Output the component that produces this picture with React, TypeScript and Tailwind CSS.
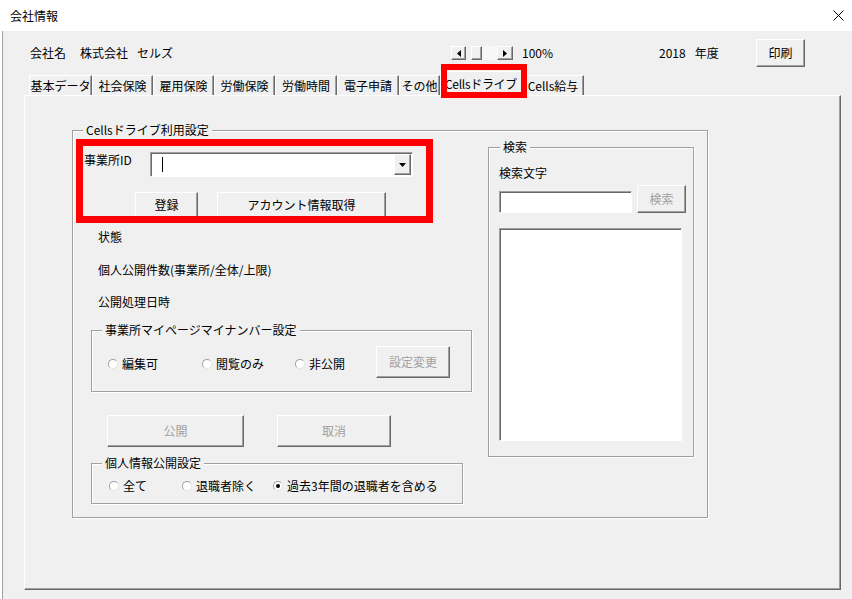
import type { ReactNode } from 'react';

// Win32-style 3D edges
const raised =
  'bg-[#f0f0f0] border border-white border-r-[#696969] border-b-[#696969] shadow-[inset_-1px_-1px_0_#a0a0a0]';
const sunken =
  'bg-white border border-[#a0a0a0] border-r-white border-b-white shadow-[inset_1px_1px_0_#696969]';
const etched =
  'relative border border-[#a0a0a0] shadow-[inset_1px_1px_0_#fff,1px_1px_0_#fff]';

const TABS = [
  { label: '基本データ', w: 'w-[63px]' },
  { label: '社会保険', w: 'w-[61px]' },
  { label: '雇用保険', w: 'w-[61px]' },
  { label: '労働保険', w: 'w-[61px]' },
  { label: '労働時間', w: 'w-[62px]' },
  { label: '電子申請', w: 'w-[62px]' },
  { label: 'その他', w: 'w-[41px]' },
];

function Button({ className, disabled, children }: { className: string; disabled?: boolean; children?: ReactNode }) {
  return (
    <div className={`${raised} ${className} flex items-center justify-center ${disabled ? 'text-[#a0a0a0]' : ''}`}>
      {children}
    </div>
  );
}

function Group({ label, labelLeft, className, children }: { label: string; labelLeft: string; className: string; children?: ReactNode }) {
  return (
    <div className={`${etched} ${className}`}>
      <span className={`absolute -top-[9px] ${labelLeft} bg-[#f0f0f0] px-[3px] leading-[16px]`}>{label}</span>
      {children}
    </div>
  );
}

function Radio({ label, checked, className }: { label: string; checked?: boolean; className?: string }) {
  return (
    <div className={`flex items-center ${className ?? ''}`}>
      <span className="w-[10px] h-[10px] rounded-full bg-white border border-[#a0a0a0] border-r-[#e3e3e3] border-b-[#e3e3e3] flex items-center justify-center">
        {checked && <span className="w-[4px] h-[4px] rounded-full bg-black" />}
      </span>
      <span className="ml-[4px]">{label}</span>
    </div>
  );
}

function Arrow({ dir }: { dir: 'left' | 'right' | 'down' }) {
  if (dir === 'down')
    return (
      <svg width="7" height="4" viewBox="0 0 7 4">
        <polygon points="0,0 7,0 3.5,4" fill="#000" />
      </svg>
    );
  return (
    <svg width="4" height="7" viewBox="0 0 4 7">
      <polygon points={dir === 'left' ? '4,0 4,7 0,3.5' : '0,0 0,7 4,3.5'} fill="#000" />
    </svg>
  );
}

export default function App() {
  return (
    <div className="w-[852px] h-[599px] bg-white text-black text-[12px] leading-[16px] font-['Noto_Sans_CJK_JP','Noto_Sans',sans-serif] overflow-hidden flex flex-col">
      {/* title bar */}
      <div className="h-[31px] shrink-0 flex items-center justify-between pl-[10px] pr-[8px]">
        <span>会社情報</span>
        <svg width="11" height="11" viewBox="0 0 11 11">
          <path d="M0.5 0.5 L10.5 10.5 M10.5 0.5 L0.5 10.5" stroke="#000" strokeWidth="1" />
        </svg>
      </div>

      <div className="flex-1 ml-[2px] border-l border-[#a0a0a0] bg-[#f0f0f0] pt-[8px] flex flex-col">
        {/* header row */}
        <div className="h-[28px] flex items-center pl-[27px]">
          <span className="w-[50px]">会社名</span>
          <span className="w-[371px]">
            株式会社<span className="ml-[9px]">セルズ</span>
          </span>
          <div className="flex items-center">
            <div className={`${raised} w-[15px] h-[14px] flex items-center justify-center`}>
              <Arrow dir="left" />
            </div>
            <div className={`${raised} ml-[5px] w-[11px] h-[14px]`} />
            <div className="w-[15px] h-[14px] bg-[#f7f7f7]" />
            <div className={`${raised} w-[16px] h-[14px] flex items-center justify-center`}>
              <Arrow dir="right" />
            </div>
          </div>
          <span className="ml-[9px] w-[137px]">100%</span>
          <span className="w-[97px]">
            2018<span className="ml-[9px]">年度</span>
          </span>
          <Button className="w-[49px] h-[28px]">印刷</Button>
        </div>

        {/* tabs */}
        <div className="h-[28px] flex items-end pl-[26px]">
          {TABS.map((t) => (
            <div
              key={t.label}
              className={`${t.w} h-[20px] flex items-center justify-center border-t border-l border-white border-r border-r-[#696969] shadow-[inset_-1px_0_0_#a0a0a0]`}
            >
              {t.label}
            </div>
          ))}
          <div className="relative z-10 -mb-px w-[82px] h-[25px] pb-px flex items-center justify-center bg-[#f0f0f0] border-t border-l border-white border-r border-r-[#696969] tracking-[-0.3px]">
            Cellsドライブ
            <div className="absolute left-[0px] -top-[8px] w-[86px] h-[34px] border-[6px] border-[#ff0000]" />
          </div>
          <div className="w-[62px] h-[20px] flex items-center justify-center border-t border-l border-white border-r border-r-[#696969] shadow-[inset_-1px_0_0_#a0a0a0]">
            Cells給与
          </div>
        </div>

        {/* tab page */}
        <div className="ml-[21px] w-[817px] h-[495px] border-t border-l border-white border-r border-b border-r-[#696969] border-b-[#696969] shadow-[inset_-1px_-1px_0_#a0a0a0] pl-[47px] pt-[34px]">
          <Group label="Cellsドライブ利用設定" labelLeft="left-[10px]" className="w-[636px] h-[388px] flex items-start pt-[16px] pl-[11px]">
            <div className="absolute z-10 left-[3px] top-[8px] w-[357px] h-[84px] border-[7px] border-[#ff0000]" />

            <div className="w-[390px] pt-[5px] flex flex-col">
              <div className="flex items-start">
                <span className="w-[66px]">事業所ID</span>
                <div className={`${sunken} w-[263px] h-[25px] flex items-center justify-between pr-px`}>
                  <span className="ml-[11px] w-px h-[15px] bg-black" />
                  <div className={`${raised} w-[17px] h-[21px] flex items-center justify-center`}>
                    <Arrow dir="down" />
                  </div>
                </div>
              </div>

              <div className="mt-[15px] flex pl-[51px] gap-[19px]">
                <Button className="w-[63px] h-[26px]">登録</Button>
                <Button className="w-[169px] h-[26px]">アカウント情報取得</Button>
              </div>

              <span className="mt-[11px] pl-[14px]">状態</span>
              <span className="mt-[17px] pl-[14px]">個人公開件数(事業所/全体/上限)</span>
              <span className="mt-[16px] pl-[14px]">公開処理日時</span>

              <Group label="事業所マイページマイナンバー設定" labelLeft="left-[10px]" className="mt-[20px] ml-[7px] w-[381px] h-[62px] pt-[15px] pl-[16px] flex items-start">
                <Radio label="編集可" className="w-[94px] mt-[10px]" />
                <Radio label="閲覧のみ" className="w-[93px] mt-[10px]" />
                <Radio label="非公開" className="w-[81px] mt-[10px]" />
                <Button className="w-[74px] h-[32px]" disabled>
                  設定変更
                </Button>
              </Group>

              <div className="mt-[23px] pl-[23px] flex gap-[33px]">
                <Button className="w-[137px] h-[32px]" disabled>
                  公開
                </Button>
                <Button className="w-[114px] h-[32px]" disabled>
                  取消
                </Button>
              </div>

              <Group label="個人情報公開設定" labelLeft="left-[10px]" className="mt-[16px] ml-[7px] w-[372px] h-[41px] pt-[14px] pl-[17px] flex items-start">
                <Radio label="全て" className="w-[73px]" />
                <Radio label="退職者除く" className="w-[91px]" />
                <Radio label="過去3年間の退職者を含める" checked />
              </Group>
            </div>

            <Group label="検索" labelLeft="left-[11px]" className="ml-[14px] w-[206px] h-[310px] pt-[17px] pl-[10px] flex flex-col">
              <span>検索文字</span>
              <div className="mt-[4px] h-[28px] flex items-end">
                <div className={`${sunken} w-[133px] h-[22px]`} />
                <Button className="ml-[5px] w-[49px] h-[28px]" disabled>
                  検索
                </Button>
              </div>
              <div className={`${sunken} mt-[15px] w-[183px] h-[213px]`} />
            </Group>
          </Group>
        </div>
      </div>
    </div>
  );
}
